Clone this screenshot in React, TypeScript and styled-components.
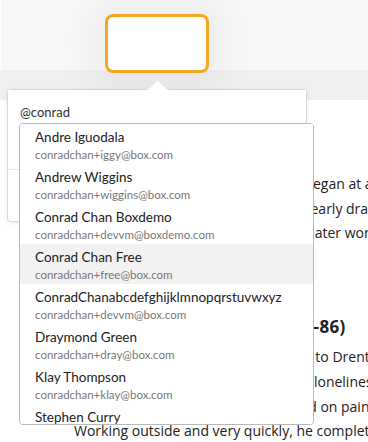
import { createGlobalStyle, styled } from "styled-components";

const GlobalStyle = createGlobalStyle`
  html, body {
    margin: 0;
    padding: 0;
    background: #fff;
  }
  body {
    font-family: Lato, "Noto Sans", sans-serif;
  }
`;

type Person = { name: string; email: string };

const people: Person[] = [
  { name: "Andre Iguodala", email: "conradchan+iggy@box.com" },
  { name: "Andrew Wiggins", email: "conradchan+wiggins@box.com" },
  { name: "Conrad Chan Boxdemo", email: "conradchan+devvm@boxdemo.com" },
  { name: "Conrad Chan Free", email: "conradchan+free@box.com" },
  { name: "ConradChanabcdefghijklmnopqrstuvwxyz", email: "conradchan+devvm@box.com" },
  { name: "Draymond Green", email: "conradchan+dray@box.com" },
  { name: "Klay Thompson", email: "conradchan+klay@box.com" },
  { name: "Stephen Curry", email: "conradchan+steph@box.com" },
];

// document lines sit behind the popover, only their tails show on the right
const firstParagraph = [
  "As a child, his interests in drawings began at an early age and he was",
  "encouraged by his mother; all of his early drawings and studies",
  "sketches were full of energy, but his later works show more skill.",
  "Few of them survive.",
];

const secondParagraph = [
  "In September 1883 van Gogh moved to Drenthe in the north of",
  "In the North, he was troubled by the loneliness of the region",
  "of the region. There, he concentrated on painting the peasants.",
  "Working outside and very quickly, he completed sketches and paintings",
];

function App() {
  const activeIndex = 3;

  return (
    <>
      <GlobalStyle />
      <S.Screen>
        <S.PrevPage />
        <S.PageGap />
        <S.Page>
          <S.Paragraph>
            {firstParagraph.map((line) => (
              <S.Line key={line}>{line}</S.Line>
            ))}
          </S.Paragraph>
          <S.Heading>Nuenen and Antwerp (1883–86)</S.Heading>
          <S.Paragraph>
            {secondParagraph.map((line) => (
              <S.Line key={line}>{line}</S.Line>
            ))}
          </S.Paragraph>
        </S.Page>

        <S.Highlight />

        <S.Popover>
          <S.InputArea>@conrad</S.InputArea>
          <S.Footer />
          <S.Dropdown>
            {people.map((p, i) => (
              <S.Item key={p.name} $active={i === activeIndex}>
                <S.Name>{p.name}</S.Name>
                <S.Email>{p.email}</S.Email>
              </S.Item>
            ))}
          </S.Dropdown>
        </S.Popover>
      </S.Screen>
    </>
  );
}
export default App;

const Screen = styled.div`
  position: relative;
  width: 368px;
  height: 442px;
  overflow: hidden;
  background: #fff;
`;

const PrevPage = styled.div`
  height: 70px;
  background: #f8f8f8;
  border-left: 1px solid #fff;
`;

const PageGap = styled.div`
  height: 30px;
  background: #efefef;
`;

const Page = styled.div`
  padding: 72px 0 0 74px;
  font-family: "Open Sans", "Noto Sans", sans-serif;
  font-size: 14px;
  color: #222;
`;

const Paragraph = styled.div`
  line-height: 24.6px;
`;

const Line = styled.div`
  white-space: nowrap;
`;

const Heading = styled.div`
  margin: 43px 0 4px;
  font-size: 17px;
  font-weight: 700;
  letter-spacing: 0.25px;
  line-height: 28px;
  white-space: nowrap;
`;

const Highlight = styled.div`
  position: absolute;
  left: 105px;
  top: 14px;
  width: 104px;
  height: 59px;
  box-sizing: border-box;
  border: 3px solid #f5a623;
  border-radius: 8px;
  background: #fff;
  box-shadow: 0 0 40px 14px rgba(0, 0, 0, 0.05);
`;

const Popover = styled.div`
  position: absolute;
  left: 7px;
  top: 89px;
  width: 300px;
  height: 133px;
  box-sizing: border-box;
  background: #fff;
  border: 1px solid #d6d6d6;
  border-radius: 4px;
  box-shadow: 0 1px 4px rgba(0, 0, 0, 0.08);

  &::before {
    content: "";
    position: absolute;
    left: 142px;
    top: -8px;
    width: 14px;
    height: 14px;
    background: #fff;
    border-top: 1px solid #e2e2e2;
    border-left: 1px solid #e2e2e2;
    transform: rotate(45deg);
  }
`;

const InputArea = styled.div`
  position: relative;
  height: 80px;
  box-sizing: border-box;
  padding: 13px 12px 0;
  font-size: 13px;
  line-height: 18px;
  color: #333;
  border-bottom: 1px solid #e6e6e6;
  background: #fff;
`;

const Footer = styled.div`
  height: 51px;
`;

const Dropdown = styled.div`
  position: absolute;
  left: 11px;
  top: 33px;
  width: 295px;
  height: 302px;
  box-sizing: border-box;
  border: 1px solid #b9b9b9;
  border-radius: 4px;
  background: #fff;
  overflow: hidden;
`;

const Item = styled.div<{ $active?: boolean }>`
  height: 40px;
  box-sizing: border-box;
  padding: 4px 15px 0;
  background: ${({ $active }) => ($active ? "#f2f2f2" : "#fff")};
  white-space: nowrap;
`;

const Name = styled.div`
  font-size: 13.5px;
  line-height: 19px;
  color: #222;
`;

const Email = styled.div`
  font-size: 11.5px;
  line-height: 15px;
  color: #777;
`;

const S = {
  Screen,
  PrevPage,
  PageGap,
  Page,
  Paragraph,
  Line,
  Heading,
  Highlight,
  Popover,
  InputArea,
  Footer,
  Dropdown,
  Item,
  Name,
  Email,
};
